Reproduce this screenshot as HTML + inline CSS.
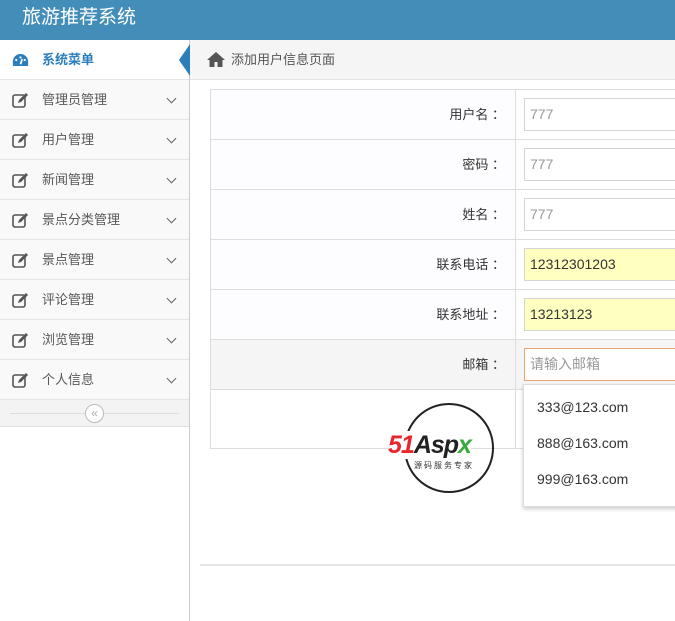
<!DOCTYPE html>
<html><head><meta charset="utf-8"><style>
*{box-sizing:border-box;margin:0;padding:0}
body{width:675px;height:621px;overflow:hidden;font-family:"Liberation Sans","Noto Sans CJK SC",sans-serif;font-size:13px;color:#333;background:#fff;position:relative}
.hd{position:absolute;left:0;top:0;width:675px;height:40px;background:#438eb9;color:#fff;font-size:19px;line-height:36px;padding-left:22px}
.sb{position:absolute;left:0;top:40px;width:190px;height:581px;background:#fff;border-right:1px solid #ccc}
.it{height:40px;border-bottom:1px solid #e5e5e5;background:#f9f9f9;position:relative;line-height:39px;padding-left:42px;color:#585858}
.it.act{background:#fff;color:#2b7dbc;font-weight:bold}
.ic{position:absolute;left:12px;top:12px;width:17px;height:16px}
.chev{position:absolute;right:14px;top:15px;width:7px;height:7px;border-right:1.5px solid #666;border-bottom:1.5px solid #666;transform:rotate(45deg)}
.col{height:27px;border-bottom:1px solid #e0e0e0;background:#f3f3f3;position:relative}
.col:before{content:"";position:absolute;left:10px;right:10px;top:13px;border-top:1px solid #ddd}
.col span{position:absolute;left:85px;top:4px;width:19px;height:19px;border:1px solid #bbb;border-radius:50%;background:#fff;font-size:12px;line-height:16px;text-align:center;color:#aaa}
.bc{position:absolute;left:190px;top:40px;width:485px;height:40px;background:#f5f5f5;border-bottom:1px solid #e5e5e5;line-height:40px;padding-left:41px;color:#555}
.tb{position:absolute;left:210px;top:89px;width:470px;border-top:1px solid #ddd;border-left:1px solid #ddd}
.row{height:50px;border-bottom:1px solid #ddd;display:flex}
.lb{width:305px;text-align:right;padding-right:10px;line-height:49px;color:#333;background:#fdfcfe;border-right:1px solid #ddd}
.in{flex:1;padding:8px 0 0 8px;background:#fff}
.in div{height:33px;border:1px solid #d5d5d5;line-height:31px;padding-left:5px;color:#999;font-size:14px}
.in div.y{background:#ffffc0;color:#333}
</style></head><body>
<div class="hd">旅游推荐系统</div>
<div class="sb">
<div class="it act"><svg class="ic" viewBox="0 0 20 16"><path d="M10 1A9 9 0 0 0 1 10v4a1 1 0 0 0 1 1h16a1 1 0 0 0 1-1v-4A9 9 0 0 0 10 1z" fill="#2b7dbc"/><circle cx="5" cy="8" r="1.3" fill="#fff"/><circle cx="10" cy="5" r="1.3" fill="#fff"/><circle cx="15" cy="8" r="1.3" fill="#fff"/><path d="M10 13L12 7" stroke="#fff" stroke-width="2"/></svg>系统菜单
<svg style="position:absolute;left:179px;top:4px" width="11" height="32"><path d="M11 0L0 16L11 32Z" fill="#2b7dbc"/></svg></div>
<div class="it"><svg class="ic" viewBox="0 0 17 16"><rect x="1" y="3" width="12" height="12" rx="2" fill="none" stroke="#555" stroke-width="1.6"/><path d="M6 11l1-3 7-7 2 2-7 7z" fill="#555"/></svg>管理员管理<i class="chev"></i></div>
<div class="it"><svg class="ic" viewBox="0 0 17 16"><rect x="1" y="3" width="12" height="12" rx="2" fill="none" stroke="#555" stroke-width="1.6"/><path d="M6 11l1-3 7-7 2 2-7 7z" fill="#555"/></svg>用户管理<i class="chev"></i></div>
<div class="it"><svg class="ic" viewBox="0 0 17 16"><rect x="1" y="3" width="12" height="12" rx="2" fill="none" stroke="#555" stroke-width="1.6"/><path d="M6 11l1-3 7-7 2 2-7 7z" fill="#555"/></svg>新闻管理<i class="chev"></i></div>
<div class="it"><svg class="ic" viewBox="0 0 17 16"><rect x="1" y="3" width="12" height="12" rx="2" fill="none" stroke="#555" stroke-width="1.6"/><path d="M6 11l1-3 7-7 2 2-7 7z" fill="#555"/></svg>景点分类管理<i class="chev"></i></div>
<div class="it"><svg class="ic" viewBox="0 0 17 16"><rect x="1" y="3" width="12" height="12" rx="2" fill="none" stroke="#555" stroke-width="1.6"/><path d="M6 11l1-3 7-7 2 2-7 7z" fill="#555"/></svg>景点管理<i class="chev"></i></div>
<div class="it"><svg class="ic" viewBox="0 0 17 16"><rect x="1" y="3" width="12" height="12" rx="2" fill="none" stroke="#555" stroke-width="1.6"/><path d="M6 11l1-3 7-7 2 2-7 7z" fill="#555"/></svg>评论管理<i class="chev"></i></div>
<div class="it"><svg class="ic" viewBox="0 0 17 16"><rect x="1" y="3" width="12" height="12" rx="2" fill="none" stroke="#555" stroke-width="1.6"/><path d="M6 11l1-3 7-7 2 2-7 7z" fill="#555"/></svg>浏览管理<i class="chev"></i></div>
<div class="it"><svg class="ic" viewBox="0 0 17 16"><rect x="1" y="3" width="12" height="12" rx="2" fill="none" stroke="#555" stroke-width="1.6"/><path d="M6 11l1-3 7-7 2 2-7 7z" fill="#555"/></svg>个人信息<i class="chev"></i></div>
<div class="col"><span>«</span></div>
</div>
<div class="bc"><svg style="position:absolute;left:17px;top:12px" width="18" height="15" viewBox="0 0 18 15"><path d="M9 0L0 8h2.5v7h5v-5h3v5h5V8H18z" fill="#555"/></svg>添加用户信息页面</div>
<div class="tb">
<div class="row"><div class="lb">用户名 ：</div><div class="in"><div>777</div></div></div>
<div class="row"><div class="lb">密码 ：</div><div class="in"><div>777</div></div></div>
<div class="row"><div class="lb">姓名 ：</div><div class="in"><div>777</div></div></div>
<div class="row"><div class="lb">联系电话 ：</div><div class="in"><div class="y">12312301203</div></div></div>
<div class="row"><div class="lb">联系地址 ：</div><div class="in"><div class="y">13213123</div></div></div>
<div class="row" style="background:#f5f5f5"><div class="lb" style="background:#f5f5f5">邮箱 ：</div><div class="in" style="background:#f5f5f5"><div style="border-color:#e8a66c;background:#fff">请输入邮箱</div></div></div>
<div class="row" style="height:59px"><div class="lb" style="background:#fff"></div><div class="in"></div></div>
</div>
<div style="position:absolute;left:200px;top:564px;width:475px;border-top:2px solid #e5e5e5"></div>
<div style="position:absolute;left:404px;top:403px;width:90px;height:90px;border:2.5px solid #222;border-radius:50%"></div>
<div style="position:absolute;left:388px;top:431px;font:italic bold 25px 'Liberation Sans',sans-serif;letter-spacing:-1px;background:#fff;line-height:28px"><span style="color:#e8262b">51</span><span style="color:#222">Asp</span><span style="color:#3aa93a">x</span></div>
<div style="position:absolute;left:414px;top:460px;font-size:8px;color:#333;letter-spacing:2px">源码服务专家</div>
<div style="position:absolute;left:523px;top:384px;width:160px;height:123px;background:#fff;border:1px solid #ddd;box-shadow:0 2px 4px rgba(0,0,0,.2);font-size:14px;color:#333">
<div style="position:absolute;left:13px;top:14px">333@123.com</div>
<div style="position:absolute;left:13px;top:50px">888@163.com</div>
<div style="position:absolute;left:13px;top:86px">999@163.com</div>
</div>
</body></html>
